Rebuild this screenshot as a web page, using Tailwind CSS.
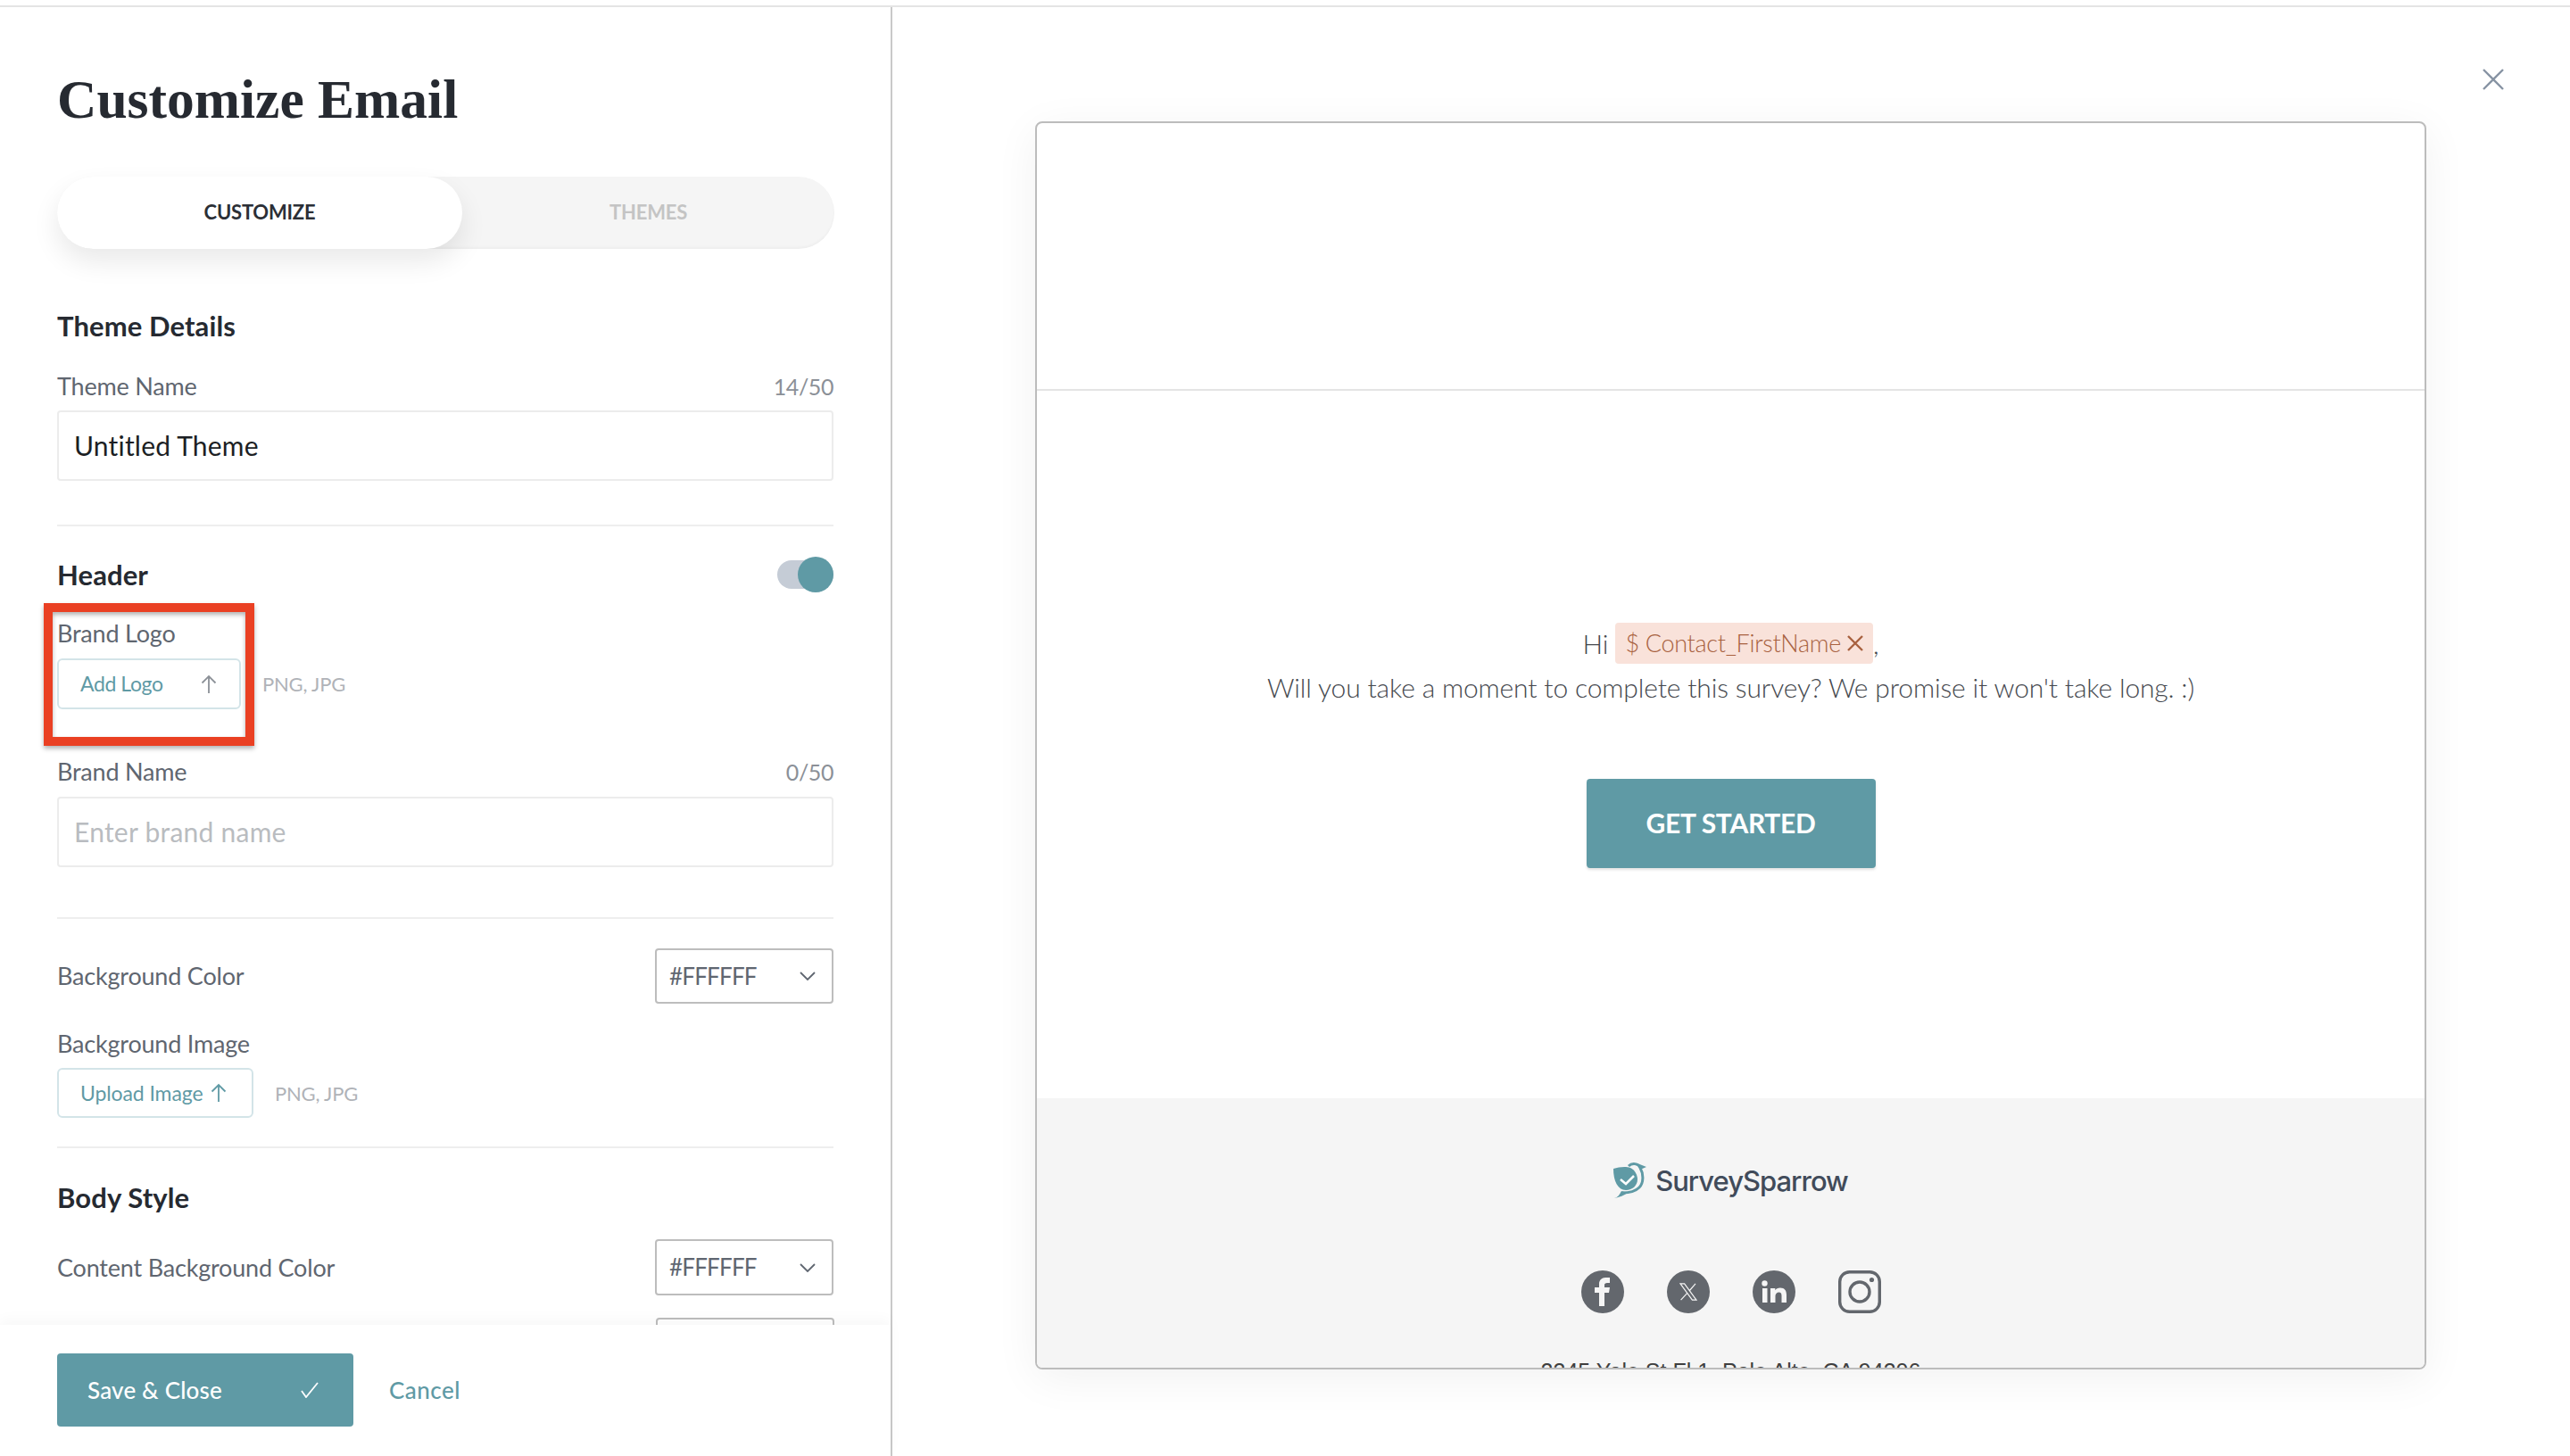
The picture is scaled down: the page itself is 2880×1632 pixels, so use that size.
<!DOCTYPE html>
<html lang="en">
  <head>
    <meta charset="UTF-8" />
    <title>Customize Email</title>
    <script src="https://cdn.jsdelivr.net/npm/@tailwindcss/browser@4"></script>
  </head>
  <body class="bg-white font-['Lato',sans-serif] text-[#5f6670] overflow-hidden">
    <div class="w-[2880px] h-[1632px] flex flex-col relative">
      <!-- Top edge -->
      <div class="h-[8px] shrink-0 bg-white border-b-2 border-[#e4e4e4]"></div>

      <div class="flex flex-1 min-h-0">
        <!-- Left panel -->
        <aside class="w-[1000px] shrink-0 border-r-2 border-[#c9c9c9] flex flex-col">
          <div class="flex-1 min-h-0 overflow-hidden px-[64px]">
            <h1 class="mt-[71px] h-[64px] leading-[64px] font-['Liberation_Serif',serif] font-bold text-[61.500px] text-[#262a31]">Customize Email</h1>

            <!-- Tabs -->
            <div class="mt-[55px] w-[871px] h-[81px] rounded-full bg-[#f5f5f5] shadow-[inset_0_-2px_3px_rgba(0,0,0,0.03)] flex">
              <div class="w-[454px] h-full pb-[2px] rounded-full bg-white shadow-[0_14px_30px_rgba(0,0,0,0.09)] flex items-center justify-center text-[22px] font-bold text-[#2b2f36] tracking-[-0.2px]">CUSTOMIZE</div>
              <div class="flex-1 pb-[2px] flex items-center justify-center text-[22px] font-bold text-[#c4c4c4] tracking-[-0.2px]">THEMES</div>
            </div>

            <h2 class="mt-[66px] h-[40px] leading-[40px] text-[31px] font-bold text-[#262a31] tracking-[0.1px]">Theme Details</h2>
            <div class="mt-[31px] h-[34px] leading-[34px] flex justify-between text-[27px] tracking-[-0.2px]">
              <span>Theme Name</span><span class="text-[25px] tracking-[-0.4px] text-[#8b9097]">14/50</span>
            </div>
            <div class="mt-[10px] h-[79px] border-2 border-[#ececec] rounded-[4px] px-[17px] flex items-center text-[30px] text-[#1c1f24] tracking-[0.2px]">Untitled Theme</div>
            <div class="mt-[49px] h-[2px] bg-[#eeeeee]"></div>

            <div class="mt-[34px] h-[40px] flex items-center justify-between">
              <h2 class="text-[31px] font-bold text-[#262a31] tracking-[0.1px]">Header</h2>
              <div class="w-[63px] h-[32px] rounded-full bg-[#c5ccd6] relative">
                <div class="absolute right-0 top-[-4px] w-[40px] h-[40px] rounded-full bg-[#5f9aa5]"></div>
              </div>
            </div>
            <div class="mt-[29px] h-[34px] leading-[34px] text-[27px] tracking-[-0.2px]">Brand Logo</div>
            <div class="mt-[11px] flex items-center">
              <div class="w-[206px] h-[57px] border-2 border-[#d3e4e8] rounded-[6px] pl-[24px] pr-[25px] flex items-center justify-between text-[23px] text-[#5f9aa5] tracking-[-0.4px]">
                <span>Add Logo</span>
                <svg class="w-[18px] h-[22px]" viewBox="0 0 18 22" fill="none" stroke="#8b9097" stroke-width="1.8"><path d="M9 21V2M1.500 9.500 9 2l7.500 7.500"/></svg>
              </div>
              <span class="ml-[24px] text-[22px] text-[#b0b3b8] tracking-[-0.2px]">PNG, JPG</span>
            </div>
            <div class="mt-[53px] h-[34px] leading-[34px] flex justify-between text-[27px] tracking-[-0.2px]">
              <span>Brand Name</span><span class="text-[25px] tracking-[-0.4px] text-[#8b9097]">0/50</span>
            </div>
            <div class="mt-[11px] h-[79px] border-2 border-[#ececec] rounded-[4px] px-[17px] flex items-center text-[30px] text-[#b9bcc0] tracking-[0.25px]">Enter brand name</div>
            <div class="mt-[56px] h-[2px] bg-[#eeeeee]"></div>

            <div class="mt-[33px] h-[62px] flex items-center justify-between text-[27px] tracking-[-0.2px]">
              <span>Background Color</span>
              <div class="w-[200px] h-full border-2 border-[#bdbdbd] rounded-[4px] pl-[14px] pr-[18px] flex items-center justify-between text-[26px] tracking-[-0.8px]">
                <span>#FFFFFF</span>
                <svg class="w-[18px] h-[10px]" viewBox="0 0 18 10" fill="none" stroke="#5f6670" stroke-width="1.8"><path d="m1 1 8 8 8-8"/></svg>
              </div>
            </div>
            <div class="mt-[28px] h-[34px] leading-[34px] text-[27px] tracking-[-0.2px]">Background Image</div>
            <div class="mt-[10px] flex items-center">
              <div class="w-[220px] h-[56px] border-2 border-[#d3e4e8] rounded-[6px] pl-[24px] flex items-center gap-[9px] text-[23px] text-[#5f9aa5] tracking-[-0.1px]">
                <span>Upload Image</span>
                <svg class="w-[18px] h-[22px]" viewBox="0 0 18 22" fill="none" stroke="#5f9aa5" stroke-width="1.8"><path d="M9 21V2M1.500 9.500 9 2l7.500 7.500"/></svg>
              </div>
              <span class="ml-[24px] text-[22px] text-[#b0b3b8] tracking-[-0.2px]">PNG, JPG</span>
            </div>
            <div class="mt-[32px] h-[2px] bg-[#eeeeee]"></div>

            <h2 class="mt-[35px] h-[40px] leading-[40px] text-[31px] font-bold text-[#262a31] tracking-[0.1px]">Body Style</h2>
            <div class="mt-[27px] h-[63px] flex items-center justify-between text-[27px] tracking-[-0.2px]">
              <span class="pt-[2px]">Content Background Color</span>
              <div class="w-[200px] h-full border-2 border-[#bdbdbd] rounded-[4px] pl-[14px] pr-[18px] flex items-center justify-between text-[26px] tracking-[-0.8px]">
                <span>#FFFFFF</span>
                <svg class="w-[18px] h-[10px]" viewBox="0 0 18 10" fill="none" stroke="#5f6670" stroke-width="1.8"><path d="m1 1 8 8 8-8"/></svg>
              </div>
            </div>
            <div class="mt-[25px] ml-[671px] w-[200px] h-[63px] border-2 border-[#bdbdbd] rounded-[4px]"></div>
          </div>

          <!-- Footer actions -->
          <div class="h-[147px] shrink-0 bg-white shadow-[0_-6px_14px_rgba(0,0,0,0.03)] relative px-[64px] pt-[32px] flex items-start gap-[40px]">
            <div class="w-[332px] h-[82px] rounded-[4px] bg-[#5f9aa5] pl-[34px] pr-[38px] flex items-center justify-between text-[26px] font-medium text-white tracking-[0.2px]">
              <span>Save &amp; Close</span>
              <svg class="w-[22px] h-[18px]" viewBox="0 0 22 18" fill="none" stroke="#fff" stroke-width="1.8"><path d="m2 10 5 7L20 1"/></svg>
            </div>
            <span class="h-[82px] flex items-center text-[26px] font-medium text-[#5f9aa5] tracking-[0.5px]">Cancel</span>
          </div>
        </aside>

        <!-- Email preview -->
        <main class="flex-1 relative pl-[160px] pt-[128px]">
          <div class="w-[1559px] h-[1399px] bg-white border-2 border-[#bcbcbc] rounded-[8px] shadow-[0_10px_50px_rgba(0,0,0,0.06)] overflow-hidden flex flex-col">
            <div class="h-[300px] shrink-0 border-b-2 border-[#e4e4e4]"></div>
            <div class="h-[793px] shrink-0 flex flex-col items-center pt-[260px]">
              <div class="h-[46px] flex items-center text-[30px] font-light text-[#45484e] tracking-[-0.15px]">
                <span>Hi&nbsp;</span>
                <span class="h-[46px] px-[11px] rounded-[4px] bg-[#f9e2da] text-[#a8613f] flex items-center gap-[7px] text-[27px] tracking-[-0.3px]">
                  <span>$ Contact_FirstName</span>
                  <svg class="w-[18px] h-[18px]" viewBox="0 0 18 18" fill="none" stroke="#a8613f" stroke-width="2.400"><path d="m1 1 16 16M17 1 1 17"/></svg>
                </span>
                <span>,</span>
              </div>
              <p class="mt-[3px] h-[46px] leading-[46px] text-[30px] font-light text-[#45484e] tracking-[-0.15px]">Will you take a moment to complete this survey? We promise it won't take long. :)</p>
              <div class="mt-[80px] pb-[2px] w-[324px] h-[100px] rounded-[4px] bg-[#5f9aa5] shadow-[0_2px_3px_rgba(0,0,0,0.12)] flex items-center justify-center text-[30px] font-bold text-white tracking-[-0.3px]">GET STARTED</div>
            </div>
            <div class="flex-1 bg-[#f5f5f5] flex flex-col items-center">
              <!-- Logo -->
              <div class="mt-[71px] h-[44px] flex items-center gap-[9px]">
                <svg class="w-[38px] h-[42px]" viewBox="10 7 38 42">
                  <path fill="#5f9aa5" d="M10 14C16 12 24 11 29 13C34 15 37 21 37 26C37 33 31 38 24 38C15 38 10 28 10 14z"/>
                  <path fill="none" stroke="#5f9aa5" stroke-width="3" d="M27 11C31 7 38 8 40 13C44 20 44 30 39 35C34 40 27 41 20 41"/>
                  <path fill="#5f9aa5" d="M37 8L47 12L40 15zM11 47C15 46 17 43 19 39L26 41C22 44 17 46 11 47z"/>
                  <path fill="none" stroke="#fff" stroke-width="2.500" d="m18 26 6 5 9-9"/>
                </svg>
                <span class="font-['Inter',sans-serif] text-[31px] font-medium text-[#414b5a] tracking-[-1px]">SurveySparrow</span>
              </div>
              <!-- Social -->
              <div class="mt-[78px] flex gap-[48px]">
                <div class="w-[48px] h-[48px] rounded-full bg-[#63676d] flex items-center justify-center">
                  <svg class="w-[18px] h-[32px]" viewBox="0 0 18 32"><path fill="#f5f5f5" d="M5 32V17H0v-6h5V7c0-4 3-7 7-7h5v6h-3c-2 0-3 1-3 2v3h6l-1 6h-5v15z"/></svg>
                </div>
                <div class="w-[48px] h-[48px] rounded-full bg-[#63676d] flex items-center justify-center">
                  <svg class="w-[20px] h-[20px]" viewBox="0 0 20 20" fill="none" stroke="#f5f5f5" stroke-width="1.200"><path d="M1 0.800h4.600L19 19.200h-4.600zM18 0.800 11 9M9 11.200 1.600 19.200"/></svg>
                </div>
                <div class="w-[48px] h-[48px] rounded-full bg-[#63676d] flex items-center justify-center">
                  <svg class="w-[28px] h-[26px]" viewBox="0 0 28 26"><g fill="#f5f5f5"><circle cx="3.500" cy="3.500" r="3.200"/><path d="M1 9h5.500v16H1zM10 9h5.300v2.300C16.400 9.700 18.200 8.600 21 8.600c5 0 7 3 7 8V25h-5.500v-7.600c0-2.500-.8-4-3-4s-4 1.600-4 4.200V25H10z"/></g></svg>
                </div>
                <svg class="w-[48px] h-[48px]" viewBox="0 0 48 48" fill="none" stroke="#63676d" stroke-width="3.400"><rect x="1.700" y="1.700" width="44.600" height="44.600" rx="11"/><circle cx="24" cy="24" r="11"/><circle cx="37.500" cy="10.500" r="2.600" fill="#63676d" stroke="none"/></svg>
              </div>
              <div class="mt-[47px] whitespace-nowrap font-['Liberation_Sans',sans-serif] text-[25px] text-[#3f3f3f]">2345 Yale St Fl 1, Palo Alto, CA 94306</div>
            </div>
          </div>
          <!-- Close -->
          <svg class="absolute left-[1782px] top-[69px] w-[24px] h-[24px]" viewBox="0 0 24 24" fill="none" stroke="#8793a3" stroke-width="2.400"><path d="m1 1 22 22M23 1 1 23"/></svg>
        </main>
      </div>

      <!-- Red annotation box -->
      <div class="absolute left-[49px] top-[676px] w-[236px] h-[160px] border-[10px] border-[#ea4023] shadow-[0_3px_5px_rgba(0,0,0,0.3),inset_0_3px_5px_rgba(0,0,0,0.3)]"></div>
    </div>
  </body>
</html>
